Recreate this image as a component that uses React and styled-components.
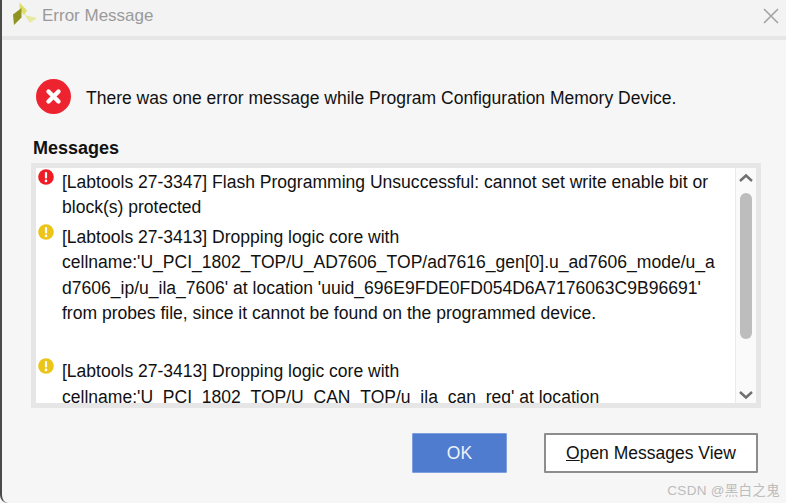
import React from 'react';
import styled, { createGlobalStyle } from 'styled-components';

const GlobalStyle = createGlobalStyle`
  html, body {
    margin: 0;
    padding: 0;
    background: #f6f6f6;
  }
  body {
    font-family: "Liberation Sans", Arial, sans-serif;
  }
`;

const Dialog = styled.div`
  position: relative;
  width: 786px;
  height: 503px;
  box-sizing: border-box;
  display: flex;
  flex-direction: column;
  overflow: hidden;
  background: #f6f6f6;
  border-left: 2px solid #4a4a4a;
  border-bottom-left-radius: 8px;
`;

const TitleBar = styled.div`
  flex: none;
  display: flex;
  align-items: center;
  padding: 0 7px 5px 11px;
  height: 31px;
  background: #f3f3f3;
  border-bottom: 4px solid #e6e6e6;
`;

const Logo = styled.svg`
  flex: none;
  width: 24px;
  height: 24px;
  margin-top: -3px;
`;

const Title = styled.span`
  margin-left: 5px;
  flex: 1;
  color: #9a9a9a;
  font-size: 17px;
`;

const Header = styled.div`
  display: flex;
  align-items: center;
  padding: 38px 0 0 34px;
  gap: 15px;
`;

const HeaderText = styled.span`
  color: #111;
  font-size: 17.5px;
  line-height: 36px;
  position: relative;
  top: 2px;
`;

const Label = styled.div`
  margin: 24px 0 0 31px;
  color: #111;
  font-size: 18px;
  font-weight: 700;
  line-height: 20px;
`;

const MessageBox = styled.div`
  width: 730px;
  height: 245px;
  box-sizing: border-box;
  margin: 5px 0 0 29px;
  display: flex;
  border: 5px solid #e6e6e6;
  background: #fff;
`;

const MessageList = styled.div`
  flex: 1;
  min-width: 0;
  overflow: hidden;
  padding-top: 1px;
`;

const Message = styled.div`
  display: flex;
  margin-bottom: ${({ $gap }) => $gap || 4}px;
`;

const MessageIcon = styled.svg`
  flex: none;
  width: 16px;
  height: 16px;
  margin: 0 0 0 2px;
`;

const MessageText = styled.div`
  margin: 1px 0 -1px 8px;
  width: 670px;
  color: #111;
  font-size: 17.55px;
  line-height: 25.4px;
  white-space: pre;
`;

const ScrollBar = styled.div`
  flex: none;
  width: 20px;
  display: flex;
  flex-direction: column;
  align-items: center;
  background: #fafafa;
  border-left: 1px solid #ebebeb;
`;

const Arrow = styled.svg`
  flex: none;
  width: 16px;
  height: 10px;
  margin: ${({ $down }) => ($down ? '0 0 3px' : '5px 0 0')};
`;

const Track = styled.div`
  flex: 1;
  width: 12px;
`;

const Thumb = styled.div`
  width: 12px;
  height: 146px;
  margin-top: 10px;
  border-radius: 6px;
  background: #bdbdbd;
`;

const Footer = styled.div`
  display: flex;
  justify-content: flex-end;
  gap: 37px;
  margin: 25px 28px 0 0;
`;

const Button = styled.button`
  box-sizing: border-box;
  height: 40px;
  width: ${({ $width }) => $width}px;
  padding: 0;
  font-family: inherit;
  font-size: 17.5px;
  border-radius: 1px;
  color: ${({ $primary }) => ($primary ? '#eef2fb' : '#111')};
  background: ${({ $primary }) => ($primary ? '#4f7ccf' : '#fff')};
  border: ${({ $primary }) => ($primary ? '1px solid #7d9fdd' : '2px solid #8d8d8d')};
`;

const Mnemonic = styled.span`
  text-decoration: underline;
`;

const Watermark = styled.div`
  position: absolute;
  right: 6px;
  bottom: 4px;
  color: #bcbcbc;
  font-size: 13.5px;
  font-family: "Liberation Sans", "Noto Sans CJK SC", sans-serif;
  letter-spacing: 0.3px;
`;

const StatusIcon = ({ color }) => (
  <MessageIcon viewBox="0 0 16 16">
    <circle cx="8" cy="8" r="7.8" fill={color} />
    <rect x="6.9" y="3" width="2.2" height="6.6" rx="1" fill="#fff" />
    <circle cx="8" cy="11.9" r="1.3" fill="#fff" />
  </MessageIcon>
);

const messages = [
  {
    color: '#ee1c25',
    gap: 4,
    lines: [
      '[Labtools 27-3347] Flash Programming Unsuccessful: cannot set write enable bit or',
      'block(s) protected',
    ],
  },
  {
    color: '#ebc51a',
    gap: 33,
    lines: [
      '[Labtools 27-3413] Dropping logic core with',
      "cellname:'U_PCI_1802_TOP/U_AD7606_TOP/ad7616_gen[0].u_ad7606_mode/u_a",
      "d7606_ip/u_ila_7606' at location 'uuid_696E9FDE0FD054D6A7176063C9B96691'",
      'from probes file, since it cannot be found on the programmed device.',
    ],
  },
  {
    color: '#ebc51a',
    gap: 0,
    lines: [
      '[Labtools 27-3413] Dropping logic core with',
      "cellname:'U_PCI_1802_TOP/U_CAN_TOP/u_ila_can_req' at location",
    ],
  },
];

const App = () => (
  <>
    <GlobalStyle />
    <Dialog>
      <TitleBar>
        <Logo viewBox="0 0 24 24">
          <path d="M6.5 0.5L14 8.5l-3 5-4.5-7z" fill="#dcdf6a" />
          <path d="M0 12.5l8.5-6.5v9.5L1 23z" fill="#8f9420" />
          <path d="M11.5 13l12.5 3-7 5z" fill="#e6eaa0" />
        </Logo>
        <Title>Error Message</Title>
        <svg width="16" height="16" viewBox="0 0 16 16">
          <path d="M1 1l14 14M15 1L1 15" stroke="#a3a3a3" strokeWidth="1.6" fill="none" />
        </svg>
      </TitleBar>
      <Header>
        <svg width="35" height="35" viewBox="0 0 35 35">
          <circle cx="17.5" cy="17.5" r="17.5" fill="#ee2330" />
          <path d="M12.5 12.5l10 10M22.5 12.5l-10 10" stroke="#fff" strokeWidth="4.4" strokeLinecap="round" />
        </svg>
        <HeaderText>There was one error message while Program Configuration Memory Device.</HeaderText>
      </Header>
      <Label>Messages</Label>
      <MessageBox>
        <MessageList>
          {messages.map((m, i) => (
            <Message key={i} $gap={m.gap}>
              <StatusIcon color={m.color} />
              <MessageText>{m.lines.join('\n')}</MessageText>
            </Message>
          ))}
        </MessageList>
        <ScrollBar>
          <Arrow viewBox="0 0 16 10">
            <path d="M2 8l6-5.5L14 8" stroke="#6f6f6f" strokeWidth="2.4" fill="none" />
          </Arrow>
          <Track>
            <Thumb />
          </Track>
          <Arrow $down viewBox="0 0 16 10">
            <path d="M2 2l6 5.5L14 2" stroke="#6f6f6f" strokeWidth="2.4" fill="none" />
          </Arrow>
        </ScrollBar>
      </MessageBox>
      <Footer>
        <Button $primary $width={95}>OK</Button>
        <Button $width={214}><Mnemonic>O</Mnemonic>pen Messages View</Button>
      </Footer>
      <Watermark>CSDN @黑白之鬼</Watermark>
    </Dialog>
  </>
);

export default App;
